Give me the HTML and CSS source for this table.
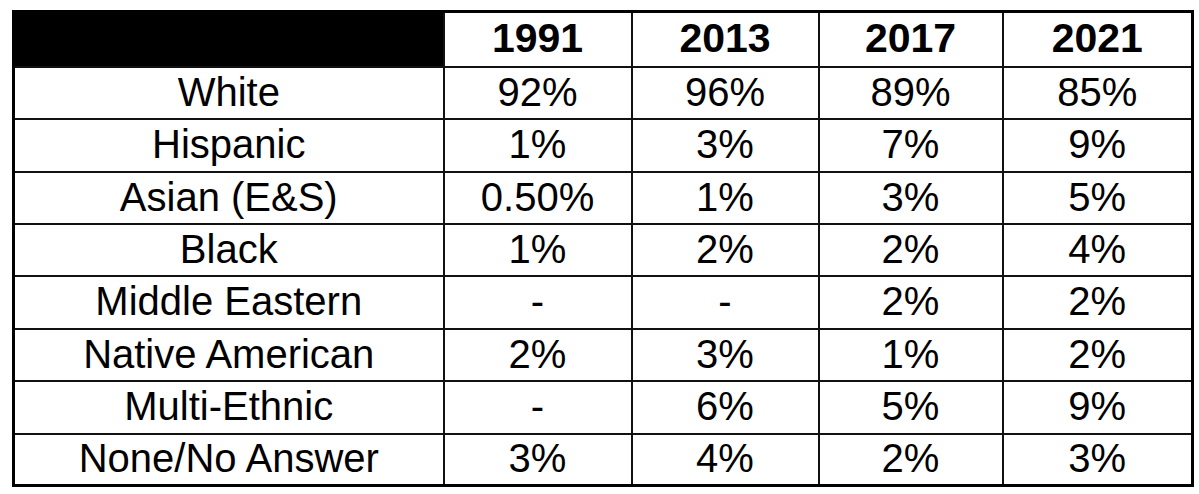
FILE: index.html
```html
<!DOCTYPE html>
<html>
<head>
<meta charset="utf-8">
<link rel="stylesheet" href="styles.css">
</head>
<body>
<table class="stats">
  <colgroup>
    <col class="c-label">
    <col class="c-1">
    <col class="c-2">
    <col class="c-3">
    <col class="c-4">
  </colgroup>
  <thead>
    <tr class="head">
      <th class="blank"></th>
      <th>1991</th>
      <th>2013</th>
      <th>2017</th>
      <th>2021</th>
    </tr>
  </thead>
  <tbody>
    <tr class="r-b"><td>White</td><td>92%</td><td>96%</td><td>89%</td><td>85%</td></tr>
    <tr class="r-a"><td>Hispanic</td><td>1%</td><td>3%</td><td>7%</td><td>9%</td></tr>
    <tr class="r-b"><td>Asian (E&amp;S)</td><td>0.50%</td><td>1%</td><td>3%</td><td>5%</td></tr>
    <tr class="r-b"><td>Black</td><td>1%</td><td>2%</td><td>2%</td><td>4%</td></tr>
    <tr class="r-a"><td>Middle Eastern</td><td>-</td><td>-</td><td>2%</td><td>2%</td></tr>
    <tr class="r-b"><td>Native American</td><td>2%</td><td>3%</td><td>1%</td><td>2%</td></tr>
    <tr class="r-a"><td>Multi-Ethnic</td><td>-</td><td>6%</td><td>5%</td><td>9%</td></tr>
    <tr class="r-b"><td>None/No Answer</td><td>3%</td><td>4%</td><td>2%</td><td>3%</td></tr>
  </tbody>
</table>
</body>
</html>
```

FILE: styles.css
```css
html, body {
  margin: 0;
  padding: 0;
  background: #ffffff;
}

body {
  padding: 10px 0 0 12px;
  font-family: "Liberation Sans", Arial, sans-serif;
  color: #000000;
}

.stats {
  border-collapse: collapse;
  table-layout: fixed;
  width: 1179px;
  border: 3px solid #000000;
}

.c-label { width: 430px; }
.c-1 { width: 188px; }
.c-2 { width: 187px; }
.c-3 { width: 184px; }
.c-4 { width: 190px; }

.stats th,
.stats td {
  border: 2px solid #111111;
  padding: 0 0 2px 0;
  text-align: center;
  vertical-align: middle;
  font-size: 40px;
  line-height: 1;
}

.stats th {
  font-weight: bold;
  font-size: 41px;
}

.head { height: 55px; }
.r-a { height: 53px; }
.r-b { height: 52px; }

.stats th.blank {
  background: #000000;
}
```
